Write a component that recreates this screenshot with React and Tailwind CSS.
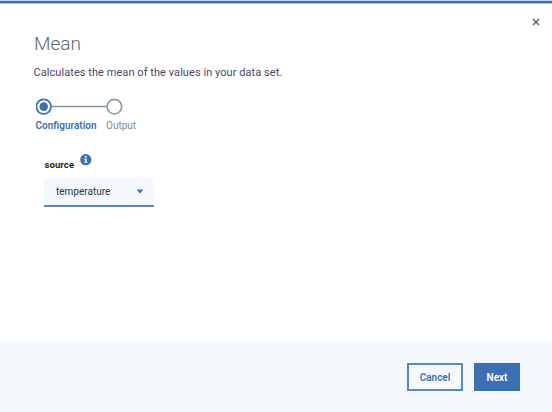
import React from "react";

function Steps() {
  return (
    <div className="mt-[19px] ml-[2px]">
      <svg className="block" width="90" height="18" viewBox="0 0 90 18" fill="none">
        <path d="M16 8.5H71" stroke="#8797a5" strokeWidth="1.3" />
        <circle cx="7.7" cy="8.6" r="7.3" stroke="#3d70b2" strokeWidth="1.8" />
        <circle cx="7.7" cy="8.6" r="4.3" fill="#3d70b2" />
        <circle cx="78.4" cy="8.6" r="7.3" stroke="#8c9ba8" strokeWidth="1.7" />
      </svg>
      <div className="mt-[3px] flex text-[10px] leading-[14px]">
        <span className="-ml-[0.5px] w-[70.5px] whitespace-nowrap font-semibold text-[#3d70b2]">Configuration</span>
        <span className="text-[#7b8794]">Output</span>
      </div>
    </div>
  );
}

function SourceField() {
  return (
    <div className="mt-[20px] ml-[10px] w-[110px]">
      <div className="flex h-[25px] items-start">
        <span className="mt-[6px] ml-[0.5px] w-[35px] text-[9.5px] leading-[12px] font-bold tracking-[0.1px] text-[#152935]">source</span>
        <svg width="12" height="13" viewBox="0 0 12 13">
          <circle cx="5.8" cy="6.7" r="5.6" fill="#3d70b2" />
          <path d="M4.9 3.1h1.6v1.4H4.9zM4.3 5.4H6.6v3.3h.8v1H4.2v-1h.9V6.4h-.8z" fill="#fff" />
        </svg>
      </div>
      <div className="flex h-[29px] items-center justify-between border-b-2 border-[#5a87c0] bg-[#f4f7fb] pr-[10px] pl-[12px]">
        <span className="text-[10px] leading-[14px] text-[#293b46]">temperature</span>
        <svg width="8" height="5" viewBox="0 0 8 5">
          <path d="M.5.5h7L4 4.5z" fill="#3d70b2" />
        </svg>
      </div>
    </div>
  );
}

export default function App() {
  return (
    <div className="flex h-[412px] w-[552px] flex-col overflow-hidden bg-white font-['Roboto','Liberation_Sans',sans-serif]">
      <div className="h-[4px] shrink-0 border-t border-b border-t-[#c3d4e8] border-b-[#a9c1df] bg-[#3d70b2]" />
      <header className="flex h-[91px] justify-between pr-3 pl-[34px]">
        <div>
          <h1 className="mt-[28px] text-[19px] leading-[24px] font-light text-[#5a6872]">Mean</h1>
          <p className="-ml-[0.5px] mt-[10px] text-[11px] leading-[14px] tracking-[0.06px] whitespace-nowrap text-[#513f66]">
            Calculates the mean of the values in your data set.
          </p>
        </div>
        <svg className="mt-[14px]" width="8" height="8" viewBox="0 0 8 8">
          <path d="M1 1l6 6M7 1L1 7" stroke="#5a6872" strokeWidth="1.5" />
        </svg>
      </header>
      <main className="-mt-[16px] flex-1 pl-[34px]">
        <Steps />
        <SourceField />
      </main>
      <footer className="flex h-[70px] items-start justify-end gap-[11px] bg-[#f4f7fb] pt-[21px] pr-[32px] text-[10px] font-semibold">
        <button className="h-[28px] w-[56px] border-2 border-[#5a87c0] text-[#3d70b2]">Cancel</button>
        <button className="h-[28px] w-[46px] bg-[#3d70b2] text-white">Next</button>
      </footer>
    </div>
  );
}
